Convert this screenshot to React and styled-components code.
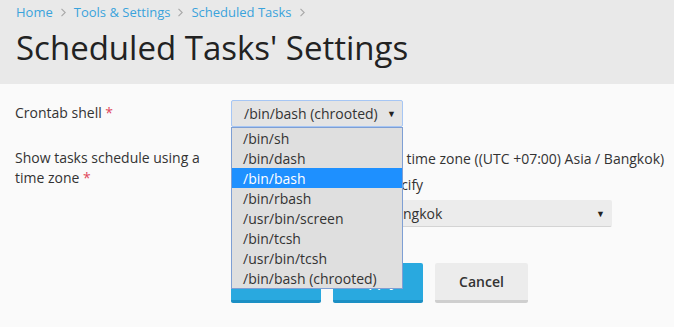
import React from "react";
import styled, { createGlobalStyle } from "styled-components";

const Global = createGlobalStyle`
  html, body { margin: 0; padding: 0; }
  body {
    background: #fafafa;
    font-family: "Open Sans", "Noto Sans", sans-serif;
    color: #333;
    width: 674px;
    height: 327px;
    overflow: hidden;
  }
`;

const Header = styled.header`
  background: #e9e9e9;
  height: 84px;
  box-sizing: border-box;
  padding: 3px 16px 0;
`;

const Crumbs = styled.nav`
  display: flex;
  align-items: center;
  gap: 8px;
  font-size: 13px;
  line-height: 18px;
`;

const Crumb = styled.a`
  color: #3aa3dc;
  text-decoration: none;
`;

const Chevron = () => (
  <svg width="5" height="9" viewBox="0 0 5 9" aria-hidden="true">
    <path d="M0.5 0.8 L4.2 4.5 L0.5 8.2" fill="none" stroke="#a8a8a8" strokeWidth="1.1" />
  </svg>
);

const Title = styled.h1`
  margin: 6px 0 0;
  font-weight: 400;
  font-size: 33px;
  line-height: 42px;
  color: #222;
`;

const Form = styled.div`
  padding: 16px 15px 0;
  display: grid;
  grid-template-columns: 216px 1fr;
  row-gap: 21px;
`;

const Label = styled.div`
  font-size: 14px;
  line-height: 20px;
  color: #333;
  padding-top: ${p => p.$top || 0}px;
  padding-right: 14px;
`;

const Req = styled.span`
  color: #e0475a;
`;

const Field = styled.div`
  position: relative;
  z-index: ${p => p.$z || 0};
  display: flex;
  flex-direction: column;
`;

const SelectBox = styled.div`
  box-sizing: border-box;
  width: ${p => p.$w}px;
  height: 27px;
  display: flex;
  align-items: center;
  justify-content: space-between;
  padding: 0 6px 0 ${p => p.$pad || 12}px;
  font-size: 14px;
  color: #333;
  background: ${p => (p.$focus ? "#e4e4e4" : "#ececec")};
  border: 1px solid ${p => (p.$focus ? "#a6c6f4" : "transparent")};
  border-bottom-color: ${p => (p.$focus ? "#a6c6f4" : "#d4d4d4")};
  border-radius: 2px;
  white-space: nowrap;
`;

const Caret = styled.span`
  font-size: 9px;
  color: #222;
`;

const List = styled.ul`
  position: absolute;
  left: 0;
  top: 27px;
  z-index: 5;
  margin: 0;
  padding: 0;
  list-style: none;
  box-sizing: border-box;
  width: 172px;
  background: #dfdfdf;
  border: 1px solid #7e9fd4;
`;

const Item = styled.li`
  height: 20px;
  line-height: 21px;
  padding-left: 11px;
  font-size: 14px;
  color: ${p => (p.$active ? "#fff" : "#333")};
  background: ${p => (p.$active ? "#1e90ff" : "transparent")};
  white-space: nowrap;
`;

const Radio = styled.label`
  display: flex;
  align-items: center;
  gap: 6px;
  height: 20px;
  font-size: 14px;
  color: #333;
  margin-bottom: 6px;
  white-space: nowrap;
`;

const Dot = styled.span`
  width: 12px;
  height: 12px;
  border-radius: 50%;
  border: 1px solid #999;
  background: #fff;
  box-sizing: border-box;
`;

const Buttons = styled.div`
  grid-column: 2;
  display: flex;
  gap: 12px;
  margin-top: 15px;
`;

const Button = styled.button`
  box-sizing: border-box;
  height: 40px;
  width: ${p => p.$w}px;
  font-family: inherit;
  font-size: 14px;
  font-weight: 600;
  border: none;
  border-radius: 2px;
  color: ${p => (p.$primary ? "#fff" : "#333")};
  background: ${p => (p.$primary ? "#29a9df" : "#ececec")};
  border-bottom: 3px solid ${p => (p.$primary ? "#1b8fc4" : "#cfcfcf")};
  padding: 0;
`;

const shells = [
  "/bin/sh",
  "/bin/dash",
  "/bin/bash",
  "/bin/rbash",
  "/usr/bin/screen",
  "/bin/tcsh",
  "/usr/bin/tcsh",
  "/bin/bash (chrooted)",
];

export default function App() {
  return (
    <>
      <Global />
      <Header>
        <Crumbs>
          <Crumb>Home</Crumb>
          <Chevron />
          <Crumb>Tools &amp; Settings</Crumb>
          <Chevron />
          <Crumb>Scheduled Tasks</Crumb>
          <Chevron />
        </Crumbs>
        <Title>Scheduled Tasks' Settings</Title>
      </Header>
      <Form>
        <Label $top={3}>
          Crontab shell <Req>*</Req>
        </Label>
        <Field $z={5}>
          <SelectBox $w={172} $focus>
            /bin/bash (chrooted)
            <Caret>▼</Caret>
          </SelectBox>
          <List>
            {shells.map(s => (
              <Item key={s} $active={s === "/bin/bash"}>
                {s}
              </Item>
            ))}
          </List>
        </Field>

        <Label>
          Show tasks schedule using a time zone <Req>*</Req>
        </Label>
        <Field>
          <Radio>
            <Dot />
            Use the server's system time zone ((UTC +07:00) Asia / Bangkok)
          </Radio>
          <Radio>
            <Dot />
            Use the time zone I specify
          </Radio>
          <SelectBox $w={381} $pad={29}>
            (UTC +07:00) Asia / Bangkok
            <Caret>▼</Caret>
          </SelectBox>
        </Field>

        <Buttons>
          <Button $primary $w={90}>OK</Button>
          <Button $primary $w={90}>Apply</Button>
          <Button $w={93}>Cancel</Button>
        </Buttons>
      </Form>
    </>
  );
}
